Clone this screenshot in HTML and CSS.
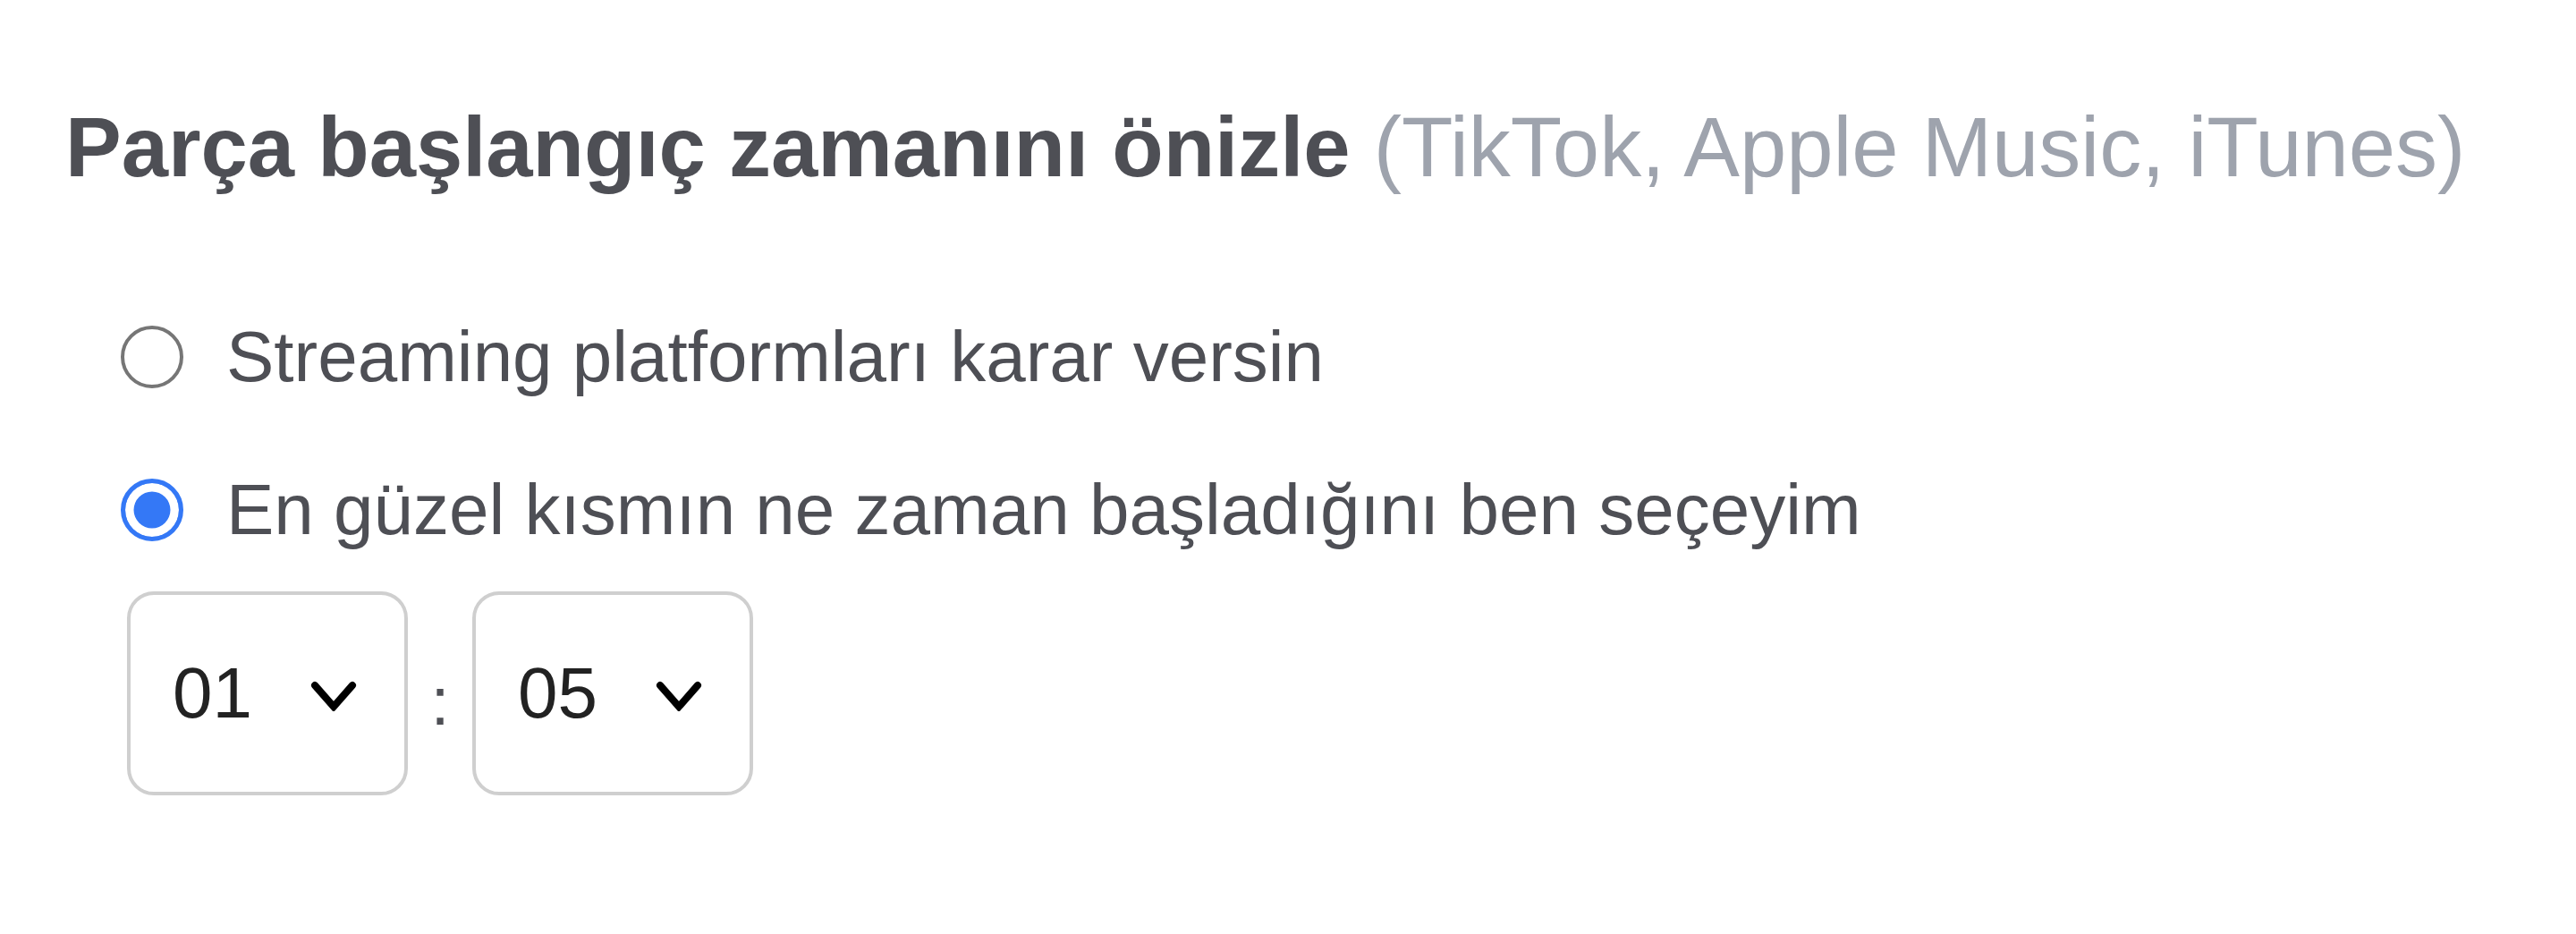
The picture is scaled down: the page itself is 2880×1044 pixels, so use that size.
FILE: index.html
```html
<!DOCTYPE html>
<html lang="tr">
<head>
    <meta charset="UTF-8">
    <meta name="viewport" content="width=device-width, initial-scale=1.0">
    <title>Parça başlangıç zamanı</title>
    <link rel="stylesheet" href="styles.css">
</head>
<body>

    <div class="section">
        <h2 class="title">Parça başlangıç zamanını önizle <span class="hint">(TikTok, Apple Music, iTunes)</span></h2>

        <!-- Start time choice -->
        <div class="options">
            <label class="option">
                <input type="radio" name="start-time" value="auto">
                <span>Streaming platformları karar versin</span>
            </label>
            <label class="option">
                <input type="radio" name="start-time" value="manual" checked>
                <span>En güzel kısmın ne zaman başladığını ben seçeyim</span>
            </label>
        </div>

        <!-- Minute / second pickers -->
        <div class="time-pick">
            <div class="select-box">
                <span class="value">01</span>
                <svg class="chevron" width="54" height="36" viewBox="0 0 54 36">
                    <polyline points="6,7 27,31 48,7" fill="none" stroke="#000" stroke-width="8" stroke-linecap="round" stroke-linejoin="miter"/>
                </svg>
            </div>
            <span class="colon">:</span>
            <div class="select-box">
                <span class="value">05</span>
                <svg class="chevron" width="54" height="36" viewBox="0 0 54 36">
                    <polyline points="6,7 27,31 48,7" fill="none" stroke="#000" stroke-width="8" stroke-linecap="round" stroke-linejoin="miter"/>
                </svg>
            </div>
        </div>
    </div>

</body>
</html>
```

FILE: styles.css
```css
/* General styles */
body {
    margin: 0;
    background: #ffffff;
    font-family: "Liberation Sans", Arial, Helvetica, sans-serif;
    color: #4e4f55;
}

.section {
    padding: 118px 0 0 73px;
}

.title {
    margin: 0 0 137px;
    font-size: 94px;
    line-height: 1;
    font-weight: bold;
    color: #4e4f55;
    white-space: nowrap;
}

.hint {
    font-weight: normal;
    color: #9ea3ad;
}

/* Radio list */
.options {
    display: flex;
    flex-direction: column;
    gap: 71px;
    padding-left: 62px;
}

.option {
    display: flex;
    align-items: center;
    font-size: 80px;
    line-height: 100px;
    cursor: pointer;
}

.option input {
    appearance: none;
    -webkit-appearance: none;
    margin: 0 48px 0 0;
    width: 70px;
    height: 70px;
    box-sizing: border-box;
    border: 4px solid #767676;
    border-radius: 50%;
    background: #ffffff;
    flex-shrink: 0;
}

.option input:checked {
    border: 5px solid #3478f6;
    background: #3478f6;
    box-shadow: inset 0 0 0 9.5px #ffffff;
}

/* Time pickers */
.time-pick {
    display: flex;
    align-items: center;
    margin: 41px 0 0 69px;
}

.select-box {
    display: flex;
    align-items: center;
    justify-content: space-between;
    width: 314px;
    height: 228px;
    box-sizing: border-box;
    padding: 0 52px 0 47px;
    border: 4px solid #cfcfcf;
    border-radius: 30px;
    background: #ffffff;
}

.value {
    font-size: 80px;
    line-height: 1;
    color: #222222;
}

.chevron {
    margin-top: 4px;
}

.colon {
    width: 72px;
    margin-top: 18px;
    text-align: center;
    font-size: 76px;
    line-height: 1;
    color: #4e4f55;
}
```
